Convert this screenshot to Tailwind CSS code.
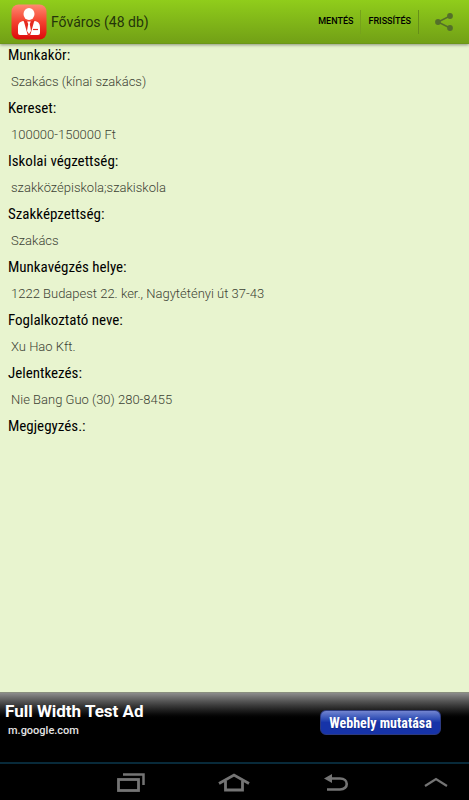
<!DOCTYPE html>
<html lang="hu">
<head>
    <meta charset="UTF-8">
    <meta name="viewport" content="width=device-width, initial-scale=1.0">
    <title>Főváros (48 db)</title>
    <script src="https://cdn.jsdelivr.net/npm/@tailwindcss/browser@4"></script>
    <style>
        body {
            font-family: Roboto, 'Noto Sans', sans-serif;
        }
        .label {
            font-family: 'Roboto Condensed', Roboto, sans-serif;
        }
    </style>
</head>
<body class="min-h-screen flex flex-col bg-[#e8f4cf] text-black">
    <!-- Action bar -->
    <header class="relative h-11 shrink-0 flex items-center justify-between pl-[11px] pr-4 bg-linear-to-b from-[#90cd1b] to-[#72a016] border-b border-[#6b9618] shadow-[0_1px_3px_rgba(0,0,0,0.4)]">
        <div class="flex items-center gap-1">
            <svg class="w-9 h-9" viewBox="0 0 36 36" aria-hidden="true">
                <defs>
                    <linearGradient id="logo" x1="0" y1="0" x2="0" y2="1">
                        <stop offset="0" stop-color="#ff8a70"/>
                        <stop offset="0.5" stop-color="#f4402f"/>
                        <stop offset="1" stop-color="#dc0a0a"/>
                    </linearGradient>
                </defs>
                <rect x="0.5" y="0.5" width="35" height="35" rx="7" fill="url(#logo)"/>
                <ellipse cx="18" cy="10" rx="5.5" ry="6" fill="#fff"/>
                <path d="M12 17 C8 18 7 20 7 24 V29 Q7 31 9 31 H27 Q29 31 29 29 V24 C29 20 28 18 24 17 L18 19 Z" fill="#fff"/>
                <path d="M12.500 16 L17 32 H19 L23.500 16 L18 18 Z" fill="#e52a20"/>
                <path d="M16.200 17.500 H19.800 L18.800 20 L20 27 L18 30 L16 27 L17.200 20 Z" fill="#fff"/>
                <path d="M22 25.500 H27" stroke="#e52a20" stroke-width="1.200"/>
            </svg>
            <h1 class="text-sm text-[#24350a]">Főváros (48 db)</h1>
        </div>
        <div class="flex items-center">
            <button class="h-6 px-[7px] text-[9px] font-medium border-r border-[#76a31b]">MENTÉS</button>
            <button class="h-6 px-[7px] text-[9px] font-medium border-r border-[#668f18]">FRISSÍTÉS</button>
            <button class="ml-4" aria-label="Megosztás">
                <svg class="w-[18px] h-[18px]" viewBox="0 0 18 18" fill="#54702a">
                    <path d="M15 3 L3 9 L15 15" fill="none" stroke="#54702a" stroke-width="1.500"/>
                    <circle cx="15" cy="3" r="2.900"/>
                    <circle cx="3" cy="9" r="2.900"/>
                    <circle cx="15" cy="15" r="2.900"/>
                </svg>
            </button>
        </div>
    </header>

    <!-- Job details -->
    <main class="grow px-2 pt-px">
        <dl class="text-[13px] [&>dt]:text-[15px] [&>dt]:leading-[21px] [&>dd]:leading-8 [&>dd]:pl-[3px] [&>dd]:font-light [&>dd]:text-[#3c4234]">
            <dt class="label">Munkakör:</dt>
            <dd>Szakács (kínai szakács)</dd>
            <dt class="label">Kereset:</dt>
            <dd>100000-150000 Ft</dd>
            <dt class="label">Iskolai végzettség:</dt>
            <dd>szakközépiskola;szakiskola</dd>
            <dt class="label">Szakképzettség:</dt>
            <dd>Szakács</dd>
            <dt class="label">Munkavégzés helye:</dt>
            <dd>1222 Budapest 22. ker., Nagytétényi út 37-43</dd>
            <dt class="label">Foglalkoztató neve:</dt>
            <dd>Xu Hao Kft.</dd>
            <dt class="label">Jelentkezés:</dt>
            <dd>Nie Bang Guo (30) 280-8455</dd>
            <dt class="label">Megjegyzés.:</dt>
        </dl>
    </main>

    <!-- Ad banner -->
    <aside class="h-[70px] shrink-0 flex justify-between pl-[5px] pr-7 bg-black bg-linear-to-b from-[#8c8c8c] to-black to-40% border-t border-[#8a8f80] text-white">
        <div class="pt-[7px]">
            <h2 class="text-[17px] leading-[22px] font-bold">Full Width Test Ad</h2>
            <a href="#" class="block pl-[3px] text-[11px] leading-[18px] font-medium text-[#e4e4e4]">m.google.com</a>
        </div>
        <button class="label mt-[17px] h-[25px] w-[121px] rounded-md border border-[#2c3a80] bg-linear-to-b from-[#7284d0] to-[#1633a8] to-50% text-sm leading-none font-bold text-shadow-xs">Webhely mutatása</button>
    </aside>

    <!-- System navigation -->
    <nav class="h-[38px] shrink-0 flex items-center justify-between pl-[117px] pr-[21px] bg-black border-t-2 border-[#082a3a] text-[#747474]">
        <button aria-label="Legutóbbi alkalmazások">
            <svg class="w-7 h-[19px]" viewBox="0 0 28 19" fill="none" stroke="currentColor">
                <rect x="1.500" y="6.500" width="20" height="11" stroke-width="2.800"/>
                <path d="M6 1.500 H26.500 V12" stroke-width="2.500"/>
            </svg>
        </button>
        <button aria-label="Kezdőképernyő">
            <svg class="w-8 h-[19px]" viewBox="0 0 32 19" fill="none" stroke="currentColor">
                <path d="M1 10.500 L16 2 L31 10.500" stroke-width="2.800"/>
                <path d="M7.500 8 V17 H24.500 V8" stroke-width="2.800"/>
            </svg>
        </button>
        <button aria-label="Vissza">
            <svg class="w-7 h-[19px]" viewBox="0 0 28 19" fill="none" stroke="currentColor">
                <path d="M7 5.500 H17 C26 5.500 26 16.500 17 16.500 H4" stroke-width="2.600"/>
                <path d="M1 5.500 L9 1 V10 Z" fill="currentColor" stroke="none"/>
            </svg>
        </button>
        <button aria-label="Felfelé">
            <svg class="w-6 h-[19px]" viewBox="0 0 24 19" fill="none" stroke="currentColor">
                <path d="M1 13 L12 6 L23 13" stroke-width="2.200"/>
            </svg>
        </button>
    </nav>
</body>
</html>
